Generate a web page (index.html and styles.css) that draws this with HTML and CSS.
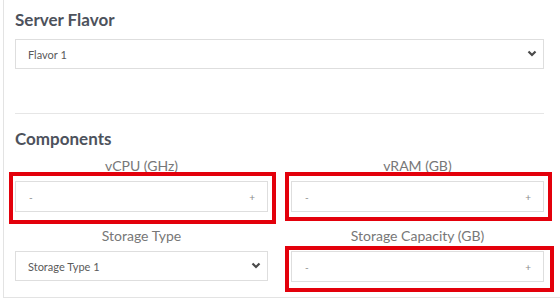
FILE: index.html
```html
<!DOCTYPE html>
<html lang="en">
 <head>
  <meta charset="UTF-8" />
  <meta name="viewport" content="width=device-width, initial-scale=1.0" />
  <title>Server configuration</title>
  <link rel="stylesheet" href="styles.css">
 </head>
 <body>
  <div class="card">
   <h2 class="section-title">Server Flavor</h2>
   <div class="select-wrap">
    <select class="select" id="flavor">
     <option>Flavor 1</option>
     <option>Flavor 2</option>
    </select>
    <svg class="chevron" width="10" height="7" viewBox="0 0 10 7">
     <path d="M1.5 1.5 L5 5 L8.5 1.5" fill="none" stroke="#4a4a4a" stroke-width="2.2" />
    </svg>
   </div>

   <hr class="divider" />

   <h2 class="section-title components">Components</h2>

   <div class="fields">
    <div class="field">
     <label>vCPU (GHz)</label>
     <div class="stepper mark mark-cpu">
      <button>-</button>
      <button>+</button>
     </div>
    </div>

    <div class="field">
     <label>vRAM (GB)</label>
     <div class="stepper mark mark-ram">
      <button>-</button>
      <button>+</button>
     </div>
    </div>

    <div class="field">
     <label>Storage Type</label>
     <div class="select-wrap">
      <select class="select" id="storage-type">
       <option>Storage Type 1</option>
       <option>Storage Type 2</option>
      </select>
      <svg class="chevron" width="10" height="7" viewBox="0 0 10 7">
       <path d="M1.5 1.5 L5 5 L8.5 1.5" fill="none" stroke="#4a4a4a" stroke-width="2.2" />
      </svg>
     </div>
    </div>

    <div class="field">
     <label>Storage Capacity (GB)</label>
     <div class="stepper mark mark-capacity">
      <button>-</button>
      <button>+</button>
     </div>
    </div>
   </div>
  </div>
 </body>
</html>
```

FILE: styles.css
```css
body {
 margin: 0;
 background: #fff;
 font-family: Lato, "Open Sans", sans-serif;
 overflow: hidden;
}

.card {
 margin-left: 3px;
 width: 560px;
 height: 298px;
 box-sizing: border-box;
 border-left: 1px solid #e3e3e3;
 border-bottom: 1px solid #e3e3e3;
 padding: 9px 0 0 11px;
}

.card > * {
 width: 529px;
}

.section-title {
 margin: 0;
 font-size: 17px;
 line-height: 22px;
 font-weight: 700;
 color: #4d525c;
}

.select-wrap {
 position: relative;
 margin-top: 8px;
}

.select {
 display: block;
 width: 100%;
 height: 30px;
 box-sizing: border-box;
 appearance: none;
 -webkit-appearance: none;
 border: 1px solid #dedede;
 border-radius: 0;
 background: #fff;
 padding: 0 12px;
 font-family: inherit;
 font-size: 11px;
 color: #5a5a5a;
}

.chevron {
 position: absolute;
 right: 7px;
 top: 11px;
}

.divider {
 border: none;
 border-top: 1px solid #e6e6e6;
 margin: 44px 0 0;
 height: 0;
}

.components {
 margin-top: 14px;
}

.fields {
 display: grid;
 grid-template-columns: 253px 253px;
 column-gap: 23px;
 row-gap: 15px;
 margin-top: 7px;
}

.field {
 display: flex;
 flex-direction: column;
 align-items: stretch;
}

.field label {
 text-align: center;
 font-size: 14px;
 line-height: 18px;
 color: #777;
}

.field .select-wrap {
 margin-top: 6px;
}

.stepper {
 position: relative;
 margin-top: 6px;
 height: 31px;
 box-sizing: border-box;
 border: 1px solid #dedede;
 display: flex;
 justify-content: space-between;
 align-items: center;
 padding: 0 9px 0 10px;
}

.stepper button {
 border: none;
 background: none;
 padding: 0 3px;
 font-family: inherit;
 font-size: 10px;
 color: #8a8a8a;
}

/* red annotation boxes */
.mark::after {
 content: "";
 position: absolute;
 border: 4px solid #e3000b;
 pointer-events: none;
}

.mark-cpu::after {
 left: -7px;
 right: -9px;
 top: -10px;
 bottom: -13px;
}

.mark-ram::after {
 left: -7px;
 right: -9px;
 top: -10px;
 bottom: -10px;
}

.mark-capacity::after {
 left: -7px;
 right: -11px;
 top: -6px;
 bottom: -11px;
}
```
